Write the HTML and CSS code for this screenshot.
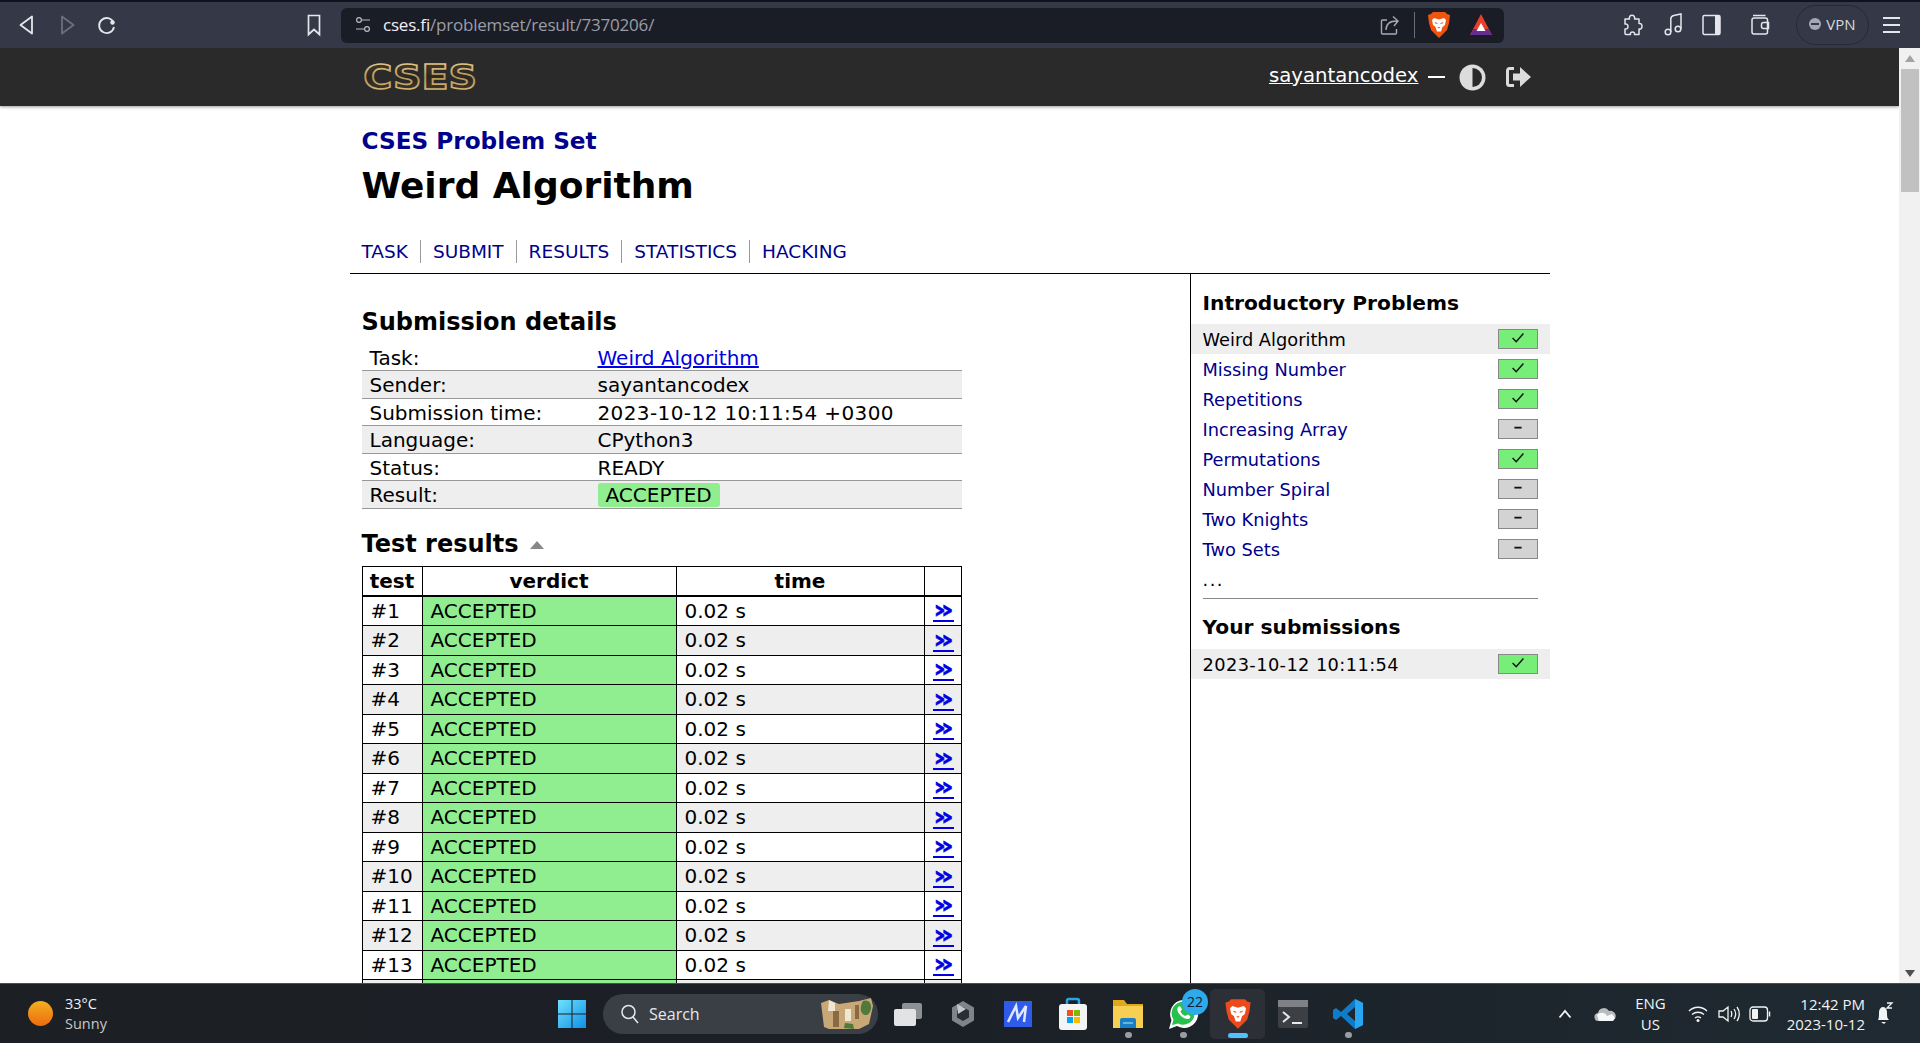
FILE: index.html
```html
<!DOCTYPE html>
<html>
  <head>
    <title>CSES - Weird Algorithm - Results</title>
    <meta name="viewport" content="width=device-width, initial-scale=1" />
    <link rel="stylesheet" href="styles.css">
  </head>
  <body>
    <svg class="defs" width="0" height="0">
      <symbol id="check" viewBox="0 0 40 20"><path d="M14 9l4 4 8-9" fill="none" stroke="#111" stroke-width="1.6"/></symbol>
      <symbol id="dash" viewBox="0 0 40 20"><path d="M16 8.5h8" fill="none" stroke="#111" stroke-width="2"/></symbol>
      <linearGradient id="gold" x1="0" y1="0" x2="0" y2="1">
        <stop offset="0" stop-color="#f0d9a0"/><stop offset="0.5" stop-color="#b79656"/><stop offset="1" stop-color="#e6c98a"/>
      </linearGradient>
      <linearGradient id="goldfill" x1="0" y1="0" x2="0" y2="1">
        <stop offset="0" stop-color="#4a3f2c"/><stop offset="0.5" stop-color="#2a2722"/><stop offset="1" stop-color="#4a3f2c"/>
      </linearGradient>
    </svg>

    <div class="tabstrip"></div>

    <div class="toolbar">
      <span class="tool"><svg width="20" height="24" viewBox="0 0 20 24"><path d="M15 3.5v17L3.5 12z" fill="none" stroke="#e4e6ec" stroke-width="1.8" stroke-linejoin="round"/></svg></span>
      <span class="tool"><svg width="20" height="24" viewBox="0 0 20 24"><path d="M5 3.5v17L16.500 12z" fill="none" stroke="#6b7080" stroke-width="1.8" stroke-linejoin="round"/></svg></span>
      <span class="tool"><svg width="22" height="24" viewBox="0 0 22 24"><path d="M17.500 9.500A7.500 7.500 0 1 0 18 14" fill="none" stroke="#e4e6ec" stroke-width="1.8"/><circle cx="16.500" cy="9.500" r="2.200" fill="#e4e6ec"/></svg></span>
      <span class="tool tool-bookmark"><svg width="16" height="24" viewBox="0 0 16 24"><path d="M2.500 2.500h11v19L8 16.500l-5.500 5z" fill="none" stroke="#e4e6ec" stroke-width="1.7"/></svg></span>

      <div class="urlbar">
        <svg class="url-tune" width="16" height="20" viewBox="0 0 16 20"><g fill="none" stroke="#b9bcc6" stroke-width="1.200"><circle cx="4" cy="5" r="2.400"/><path d="M7 5h8M1 14h8"/><circle cx="12" cy="14" r="2.400"/></g></svg>
        <span class="url"><b>cses.fi</b>/problemset/result/7370206/</span>
        <svg class="url-share" width="20" height="24" viewBox="0 0 20 24"><path d="M7 7H2.500a1 1 0 0 0-1 1v12a1 1 0 0 0 1 1h13a1 1 0 0 0 1-1v-4M6 17c0-6 4-9 11-9M13 3.500l5 4.500-4 5" fill="none" stroke="#a7aab5" stroke-width="1.400"/></svg>
        <span class="url-divider"></span>
        <svg class="url-brave" width="22" height="28" viewBox="0 0 22 28"><path d="M5 1h12l2 2 3 1-1 8-2 7-8 8-8-8-2-7-1-8 3-1z" fill="#f0540f"/><path d="M6 7l5 1.500L16 7l2 2-1 5-2.500 2-1.500 4.500h-4L7.500 16 5 14 4 9z" fill="#fff"/><path d="M6.500 11l3 1v1l-2-.5zM15.500 11l-3 1v1l2-.5zM9.500 16h3l-1.500 1.500z" fill="#f0540f"/></svg>
        <svg class="url-bat" width="24" height="24" viewBox="0 0 24 24"><path d="M12 1l11 21H1z" fill="#e8402a"/><path d="M1 22l3.500-6h15l3.500 6z" fill="#662d91"/><path d="M12 10l4.500 8h-9z" fill="#fff"/></svg>
      </div>

      <span class="tool tool-puzzle"><svg width="22" height="26" viewBox="0 0 22 26"><path d="M4 7h4.500c-1.500-5 6.500-5 5 0H18v4.500c4-1 4 6.500 0 5.500v5.500h-4.500c1-3.500-5-3.500-4 0H5c-1 0-1-1-1-1v-4.500c4 1 4-6 0-5z" fill="none" stroke="#e4e6ec" stroke-width="1.500" stroke-linejoin="round"/></svg></span>
      <span class="tool tool-music"><svg width="20" height="26" viewBox="0 0 20 26"><g fill="none" stroke="#e4e6ec" stroke-width="1.500"><circle cx="5" cy="20" r="2.800"/><circle cx="15" cy="17" r="2.800"/><path d="M7.800 20V7c0-2 1-3 3-3.500L18 2v15"/></g></svg></span>
      <span class="tool tool-sidebar"><svg width="20" height="22" viewBox="0 0 20 22"><rect x="1" y="1.500" width="17" height="19" rx="1.500" fill="none" stroke="#e4e6ec" stroke-width="1.500"/><rect x="13" y="1.500" width="5" height="19" fill="#e4e6ec"/></svg></span>
      <span class="tool tool-wallet"><svg width="20" height="24" viewBox="0 0 20 24"><g fill="none" stroke="#e4e6ec" stroke-width="1.500"><rect x="2" y="5" width="15.500" height="16" rx="2"/><path d="M3 2.500h12.500M18.500 9.500h-5a2 2 0 0 0-2 2v2a2 2 0 0 0 2 2h5z"/></g></svg></span>
      <span class="vpn"><span class="vpn-dot"></span>VPN</span>
      <span class="menu"><i></i><i></i><i></i></span>
    </div>

    <div class="viewport">
      <div class="page">
        <div class="site-header">
          <div class="site-header-inner">
            <svg class="logo" width="124" height="44" viewBox="0 0 124 44"><text x="1" y="33" transform="scale(1.165 1)">CSES</text></svg>
            <div class="account">
              <a class="username" href="#">sayantancodex</a>
              <span class="account-dash"></span>
              <svg width="27" height="27" viewBox="0 0 27 27"><circle cx="13.500" cy="13.500" r="13" fill="#dcdcdc"/><path d="M13.500 4a9.500 9.500 0 0 1 0 19z" fill="#2a2a2a"/></svg>
              <svg class="logout" width="27" height="24" viewBox="0 0 27 24"><path d="M9 3.500H4.500A2 2 0 0 0 2.500 5.500v13a2 2 0 0 0 2 2H9" fill="none" stroke="#dcdcdc" stroke-width="3"/><path d="M8 8.500h7V2l11 10-11 10v-6.500H8z" fill="#dcdcdc"/></svg>
            </div>
          </div>
        </div>

        <div class="content">
          <div class="title-block">
            <a class="set-title" href="#">CSES Problem Set</a>
            <h1>Weird Algorithm</h1>
            <div class="nav">
              <a href="#">TASK</a><a href="#">SUBMIT</a><a href="#">RESULTS</a><a href="#">STATISTICS</a><a href="#">HACKING</a>
            </div>
          </div>

          <div class="columns">
            <div class="main-col">
              <h2>Submission details</h2>
              <table class="details">
                <tr><td class="label">Task:</td><td><a href="#">Weird Algorithm</a></td></tr>
                <tr><td class="label">Sender:</td><td>sayantancodex</td></tr>
                <tr><td class="label">Submission time:</td><td class="date">2023-10-12 10:11:54 +0300</td></tr>
                <tr><td class="label">Language:</td><td>CPython3</td></tr>
                <tr><td class="label">Status:</td><td>READY</td></tr>
                <tr><td class="label">Result:</td><td><span class="accepted">ACCEPTED</span></td></tr>
              </table>

              <h2 class="results-title">Test results <span class="collapse"></span></h2>
              <table class="tests">
                <tr><th class="c-test">test</th><th class="c-verdict">verdict</th><th class="c-time">time</th><th class="c-link"></th></tr>
                <tr><td>#1</td><td class="ok">ACCEPTED</td><td>0.02 s</td><td><a class="more" href="#">»</a></td></tr>
                <tr><td>#2</td><td class="ok">ACCEPTED</td><td>0.02 s</td><td><a class="more" href="#">»</a></td></tr>
                <tr><td>#3</td><td class="ok">ACCEPTED</td><td>0.02 s</td><td><a class="more" href="#">»</a></td></tr>
                <tr><td>#4</td><td class="ok">ACCEPTED</td><td>0.02 s</td><td><a class="more" href="#">»</a></td></tr>
                <tr><td>#5</td><td class="ok">ACCEPTED</td><td>0.02 s</td><td><a class="more" href="#">»</a></td></tr>
                <tr><td>#6</td><td class="ok">ACCEPTED</td><td>0.02 s</td><td><a class="more" href="#">»</a></td></tr>
                <tr><td>#7</td><td class="ok">ACCEPTED</td><td>0.02 s</td><td><a class="more" href="#">»</a></td></tr>
                <tr><td>#8</td><td class="ok">ACCEPTED</td><td>0.02 s</td><td><a class="more" href="#">»</a></td></tr>
                <tr><td>#9</td><td class="ok">ACCEPTED</td><td>0.02 s</td><td><a class="more" href="#">»</a></td></tr>
                <tr><td>#10</td><td class="ok">ACCEPTED</td><td>0.02 s</td><td><a class="more" href="#">»</a></td></tr>
                <tr><td>#11</td><td class="ok">ACCEPTED</td><td>0.02 s</td><td><a class="more" href="#">»</a></td></tr>
                <tr><td>#12</td><td class="ok">ACCEPTED</td><td>0.02 s</td><td><a class="more" href="#">»</a></td></tr>
                <tr><td>#13</td><td class="ok">ACCEPTED</td><td>0.02 s</td><td><a class="more" href="#">»</a></td></tr>
                <tr><td></td><td class="ok"></td><td></td><td></td></tr>
              </table>
            </div>

            <div class="side-col">
              <h3>Introductory Problems</h3>
              <ul class="tasks">
                <li class="current"><span>Weird Algorithm</span><svg class="badge done"><use href="#check"/></svg></li>
                <li><a href="#">Missing Number</a><svg class="badge done"><use href="#check"/></svg></li>
                <li><a href="#">Repetitions</a><svg class="badge done"><use href="#check"/></svg></li>
                <li><a href="#">Increasing Array</a><svg class="badge"><use href="#dash"/></svg></li>
                <li><a href="#">Permutations</a><svg class="badge done"><use href="#check"/></svg></li>
                <li><a href="#">Number Spiral</a><svg class="badge"><use href="#dash"/></svg></li>
                <li><a href="#">Two Knights</a><svg class="badge"><use href="#dash"/></svg></li>
                <li><a href="#">Two Sets</a><svg class="badge"><use href="#dash"/></svg></li>
                <li><span class="dots">...</span></li>
              </ul>
              <hr />
              <h3 class="subs-title">Your submissions</h3>
              <ul class="tasks">
                <li class="current"><span class="date">2023-10-12 10:11:54</span><svg class="badge done"><use href="#check"/></svg></li>
              </ul>
            </div>
          </div>
        </div>
      </div>

      <div class="scrollbar">
        <span class="arrow-up"></span>
        <span class="thumb"></span>
        <span class="arrow-down"></span>
      </div>
    </div>

    <div class="taskbar">
      <div class="weather">
        <span class="sun"></span>
        <div class="weather-text"><div>33°C</div><div class="dim">Sunny</div></div>
      </div>

      <svg class="win" width="30" height="30" viewBox="0 0 30 30">
        <defs><linearGradient id="win" x1="0" y1="0" x2="1" y2="1"><stop offset="0" stop-color="#6fe2fb"/><stop offset="1" stop-color="#0f8fe8"/></linearGradient></defs>
        <path d="M1 1h13.500v13.500H1zM15.500 1H29v13.500H15.500zM1 15.500h13.500V29H1zM15.500 15.500H29V29H15.500z" fill="url(#win)"/>
      </svg>

      <div class="search">
        <svg width="20" height="22" viewBox="0 0 20 22"><circle cx="8.500" cy="9" r="6.500" fill="none" stroke="#e6e8ea" stroke-width="1.500"/><path d="M13 14l5 6" stroke="#e6e8ea" stroke-width="1.500"/></svg>
        <span>Search</span>
        <svg class="search-art" width="56" height="34" viewBox="0 0 56 34"><path d="M2 6l8-3 10 4 20-3 12-3 2 8-4 18-10 5H10L5 30z" fill="#c9a878"/><path d="M10 3l6 3v8H9zM26 12h6v12h-6z" fill="#efe6d4"/><path d="M44 4c5-2 9 2 8 8s-6 8-9 4 0-10 1-12zM26 26l8 1 1 5-10-1z" fill="#4f7a3a"/><path d="M14 14v16h6V14zM36 8h4v14h-4z" fill="#8a6a44"/></svg>
      </div>

      <span class="task task-first"><svg width="30" height="28" viewBox="0 0 30 28"><rect x="9" y="3" width="20" height="16" rx="2" fill="#8d9094"/><rect x="1" y="9" width="22" height="17" rx="2" fill="#e2e3e4"/></svg></span>
      <span class="task"><svg width="28" height="30" viewBox="0 0 28 30"><path d="M14 2l11 6.500v13L14 28 3 21.500v-13z" fill="#7f8489"/><path d="M14 8l6 3.500v7L14 22l-6-3.500v-7z" fill="#2a2e33"/><path d="M8 5l9 5-8 5z" fill="#c5c8cb"/></svg></span>
      <span class="task"><svg width="30" height="28" viewBox="0 0 30 28"><rect x="1" y="1" width="28" height="26" fill="#2f5be8"/><path d="M5 22L13 6l2 12 8-12-2 16" fill="none" stroke="#dfe8ff" stroke-width="2.500"/></svg></span>
      <span class="task"><svg width="30" height="34" viewBox="0 0 30 34"><path d="M9 8V4a2 2 0 0 1 2-2h8a2 2 0 0 1 2 2v4" fill="none" stroke="#2aa4e8" stroke-width="2.500"/><rect x="1" y="7" width="28" height="26" rx="3" fill="#f3f4f5"/><rect x="9" y="13" width="6" height="6" fill="#f25022"/><rect x="16" y="13" width="6" height="6" fill="#7fba00"/><rect x="9" y="20" width="6" height="6" fill="#00a4ef"/><rect x="16" y="20" width="6" height="6" fill="#ffb900"/></svg></span>
      <span class="task"><svg width="32" height="32" viewBox="0 0 32 32"><path d="M1 2h11l3 4h16v24H1z" fill="#e2a81c"/><path d="M1 8h30v22H1z" fill="#f7cf52"/><path d="M10 20h12a2 2 0 0 1 2 2v8H8v-8a2 2 0 0 1 2-2z" fill="#1a7fc4"/><path d="M11 25h10" stroke="#7cc8ee" stroke-width="1.500"/></svg><i class="pip"></i></span>
      <span class="task task-wa"><svg width="32" height="34" viewBox="0 0 32 34"><path d="M2 32l2.500-9A14 14 0 1 1 10 29z" fill="#fff"/><path d="M5 28l1.500-5.500A11.500 11.500 0 1 1 11 26.500z" fill="#28c04c"/><path d="M11 10c2-2 3 0 4 2.500l-1.500 2c1 2 2.500 3.500 5 4.500l2-1.500c2.500 1 4 2 2 4-4 3-15-6-11.500-11.500z" fill="#fff"/></svg><b class="wa-count">22</b><i class="pip"></i></span>
      <span class="task task-active"><svg width="26" height="32" viewBox="0 0 22 28"><path d="M5 1h12l2 2 3 1-1 8-2 7-8 8-8-8-2-7-1-8 3-1z" fill="#ec4a1c"/><path d="M6 7l5 1.500L16 7l2 2-1 5-2.500 2-1.500 4.500h-4L7.500 16 5 14 4 9z" fill="#fff"/><path d="M6.500 11l3 1v1l-2-.5zM15.500 11l-3 1v1l2-.5zM9.500 16h3l-1.500 1.500z" fill="#ec4a1c"/></svg><i class="pip-wide"></i></span>
      <span class="task"><svg width="30" height="30" viewBox="0 0 30 30"><rect x="0" y="1" width="30" height="28" rx="2" fill="#3c3f43"/><rect x="0" y="1" width="30" height="7" fill="#7e8185"/><path d="M5 13l6 5-6 5" fill="none" stroke="#e6e8ea" stroke-width="2"/><path d="M14 24h10" stroke="#e6e8ea" stroke-width="2"/></svg></span>
      <span class="task"><svg width="32" height="32" viewBox="0 0 32 32"><path d="M23 1l8 4v22l-8 4L9 18l-5 4-3-2v-8l3-2 5 4z" fill="#0e7cc9"/><path d="M23 1l8 4v22l-8 4z" fill="#2aa5f0"/><path d="M23 9l-8 7 8 7z" fill="#20262b"/></svg><i class="pip"></i></span>

      <div class="tray">
        <svg class="caret" width="14" height="10" viewBox="0 0 14 10"><path d="M1.500 8.500L7 2l5.500 6.500" fill="none" stroke="#f2f3f4" stroke-width="1.800"/></svg>
        <svg class="cloud" width="22" height="16" viewBox="0 0 22 16"><path d="M5 15a4 4 0 0 1-1-8 6 6 0 0 1 11-2 5 5 0 0 1 3 10z" fill="#b9bcbf"/><path d="M3 9c3-3 8-3 10 1l5-2 3 4-2 3H5z" fill="#f7f8f8"/></svg>
        <div class="lang"><div>ENG</div><div>US</div></div>
        <svg class="wifi" width="20" height="18" viewBox="0 0 20 18"><g fill="none" stroke="#f2f3f4" stroke-width="1.400"><path d="M1 6c5-5 13-5 18 0M4 9.500c3.500-3 8.500-3 12 0M7 13c2-1.500 4-1.500 6 0"/></g><circle cx="10" cy="15.500" r="1.500" fill="#f2f3f4"/></svg>
        <svg class="volume" width="22" height="18" viewBox="0 0 22 18"><g fill="none" stroke="#f2f3f4" stroke-width="1.300"><path d="M1 6h4l5-4v14l-5-4H1zM13 6c1 2 1 4 0 6M16 4c2 3 2 7 0 10M19 2c3 4 3 10 0 14"/></g></svg>
        <svg class="battery" width="22" height="16" viewBox="0 0 22 16"><rect x="1" y="1" width="17.500" height="14" rx="3" fill="none" stroke="#f2f3f4" stroke-width="1.300"/><rect x="3" y="3" width="6" height="10" rx="1" fill="#f2f3f4"/><path d="M20.500 5.500v5" stroke="#f2f3f4" stroke-width="1.500"/></svg>
        <div class="clock"><div>12:42 PM</div><div>2023-10-12</div></div>
        <svg class="bell" width="20" height="24" viewBox="0 0 20 24"><path d="M4 18c1-2 1-4 1-8 0-3 2-5 4-5s4 2 4 5c0 4 0 6 2 8z" fill="#f2f3f4"/><path d="M7 20h5l-2 2z" fill="#f2f3f4"/><path d="M13 1h5l-5 5h5" fill="none" stroke="#f2f3f4" stroke-width="1.300"/></svg>
      </div>
    </div>
  </body>
</html>
```

FILE: styles.css
```css
html {
  font-family: "DejaVu Sans", sans-serif;
}

body {
  margin: 0;
  height: 1043px;
  display: flex;
  flex-direction: column;
  overflow: hidden;
  background-color: white;
}

.defs {
  position: absolute;
}

/* browser chrome */
.tabstrip {
  height: 2px;
  background-color: #12121f;
}

.toolbar {
  height: 46px;
  display: flex;
  align-items: center;
  background-color: #343847;
  flex-shrink: 0;
}

.tool {
  width: 40px;
  display: flex;
  justify-content: center;
}

.tool:first-child {
  margin-left: 7px;
}

.tool-bookmark {
  margin-left: 167px;
  margin-right: 7px;
}

.urlbar {
  width: 1163px;
  height: 35px;
  display: flex;
  align-items: center;
  background-color: #1a1c26;
  border-radius: 6px;
  font-family: "Open Sans", sans-serif;
  font-size: 17px;
  color: #9a9da8;
}

.url-tune {
  margin-left: 14px;
}

.url {
  margin-left: 12px;
  margin-top: -2px;
  letter-spacing: -0.2px;
  flex: 1;
}

.url b {
  font-weight: normal;
  color: #f0f1f4;
}

.url-divider {
  width: 1px;
  height: 26px;
  margin: 0 13px 0 14px;
  background-color: #6b6e78;
}

.url-brave {
  margin-right: 19px;
}

.url-bat {
  margin-right: 11px;
}

.tool-puzzle {
  margin-left: 108px;
}

.tool-music {
  margin-left: 1px;
}

.tool-sidebar {
  margin-left: -1px;
}

.tool-wallet {
  margin-left: 8px;
}

.vpn {
  width: 73px;
  height: 40px;
  margin-left: 16px;
  box-sizing: border-box;
  display: flex;
  align-items: center;
  justify-content: center;
  gap: 5px;
  padding-bottom: 2px;
  border: 1px solid #262a36;
  border-radius: 20px;
  font-family: "Open Sans", sans-serif;
  font-size: 15px;
  color: #d6d8de;
}

.vpn-dot {
  width: 12px;
  height: 12px;
  border-radius: 50%;
  background: linear-gradient(#343847, #343847) center / 8px 2px no-repeat #a4a7b5;
}

.menu {
  margin-left: 14px;
  display: flex;
  flex-direction: column;
  gap: 5px;
}

.menu i {
  display: block;
  width: 17px;
  height: 2px;
  background-color: #e4e6ec;
}

/* page */
.viewport {
  flex: 1;
  min-height: 0;
  display: flex;
}

.page {
  flex: 1;
  min-width: 0;
  overflow: hidden;
}

.scrollbar {
  width: 21px;
  display: flex;
  flex-direction: column;
  align-items: center;
  background-color: #f1f1f1;
}

.arrow-up {
  margin-top: 7px;
  border: 5px solid transparent;
  border-top: 0;
  border-bottom: 7px solid #a3a3a3;
}

.thumb {
  width: 18px;
  height: 123px;
  margin-top: 7px;
  background-color: #c1c1c1;
}

.arrow-down {
  margin-top: auto;
  margin-bottom: 7px;
  border: 5px solid transparent;
  border-bottom: 0;
  border-top: 7px solid #505050;
}

.site-header {
  height: 58px;
  background-color: #2a2a2a;
  box-shadow: 0 1px 3px rgba(0, 0, 0, 0.4);
}

.site-header-inner {
  width: 1176px;
  height: 100%;
  margin: 0 auto;
  display: flex;
  align-items: center;
  justify-content: space-between;
}

.logo {
  margin-top: 1px;
}

.logo text {
  font-family: "DejaVu Sans", sans-serif;
  font-weight: bold;
  font-size: 34px;
  fill: url(#goldfill);
  stroke: url(#gold);
  stroke-width: 1.6px;
}

.account {
  display: flex;
  align-items: center;
  margin-right: 6px;
}

.username {
  font-size: 19.7px;
  color: white;
  margin-top: -4px;
}

.account-dash {
  width: 17px;
  height: 2px;
  margin: 0 14px 0 9px;
  background-color: white;
}

.logout {
  margin-left: 19px;
}

.content {
  width: 1200px;
  margin: 0 auto;
}

.title-block {
  padding: 20px 12px 11px;
  border-bottom: 1px solid black;
}

.set-title {
  display: block;
  font-size: 23.2px;
  line-height: 30px;
  font-weight: bold;
  color: #00008b;
  text-decoration: none;
}

h1 {
  font-size: 36px;
  line-height: 46px;
  margin: 7px 0 0;
}

.nav {
  display: flex;
  margin-top: 31px;
}

.nav a {
  font-size: 18.5px;
  line-height: 22px;
  padding: 1px 12px 0;
  margin-bottom: -1px;
  border-right: 1px solid #999;
  color: #00008b;
  text-decoration: none;
}

.nav a:first-child {
  padding-left: 0;
}

.nav a:last-child {
  border-right: none;
}

.columns {
  display: grid;
  grid-template-columns: 840px 360px;
}

.main-col {
  padding: 33px 0 0 12px;
}

h2 {
  font-size: 24px;
  line-height: 30px;
  margin: 0;
}

table {
  width: 600px;
  border-collapse: collapse;
  table-layout: fixed;
  font-size: 20px;
}

.details {
  margin-top: 6px;
}

.details tr {
  height: 27.5px;
}

.details td {
  padding: 2px 0 0 8px;
  border-bottom: 1px solid #999;
  line-height: 24px;
}

.details td:last-child {
  padding-left: 1px;
}

.details tr:nth-child(even) {
  background-color: #eee;
}

.label {
  width: 227px;
}

.details a {
  color: #0000e0;
}

.date {
  letter-spacing: 0.4px;
}

.accepted {
  display: inline-block;
  padding: 0 8px;
  border-radius: 3px;
  background-color: #90ee90;
}

.results-title {
  margin-top: 20px;
}

.collapse {
  display: inline-block;
  margin-left: 3px;
  vertical-align: 3px;
  border: 7px solid transparent;
  border-top: 0;
  border-bottom: 8px solid #888;
}

.tests {
  margin-top: 7px;
  border: 1px solid black;
}

.tests th,
.tests td {
  border: 1px solid black;
  padding: 0 0 0 8px;
  line-height: 24px;
}

.tests th {
  border-bottom-width: 2px;
  height: 27px;
  padding: 1px 0 0;
  text-align: center;
}

.tests td {
  height: 28.5px;
}

.tests tr:nth-child(odd) td {
  background-color: #eee;
}

.tests td.ok,
.tests tr:nth-child(odd) td.ok {
  background-color: #90ee90;
}

.c-test {
  width: 59px;
}

.c-verdict {
  width: 253px;
}

.c-time {
  width: 247px;
}

.more {
  display: inline-block;
  font-size: 25px;
  line-height: 24px;
  font-weight: bold;
  color: #0000e0;
  transform: scaleX(1.3);
  transform-origin: left center;
  -webkit-text-stroke: 0.5px #0000e0;
}

.side-col {
  border-left: 1px solid black;
  padding-top: 14px;
}

h3 {
  font-size: 20.2px;
  line-height: 30px;
  margin: 0 0 6px 12px;
}

.subs-title {
  margin-top: 13px;
  margin-bottom: 7px;
}

.tasks {
  list-style: none;
  margin: 0;
  padding: 0;
}

.tasks li {
  height: 30px;
  display: flex;
  align-items: center;
  justify-content: space-between;
  padding: 0 12px;
  font-size: 17.8px;
}

.tasks li a,
.tasks li span {
  margin-top: 1px;
}

.tasks a {
  color: #00008b;
  text-decoration: none;
}

.dots {
  letter-spacing: 1.5px;
}

.current {
  background-color: #eee;
}

.badge {
  width: 40px;
  height: 20px;
  box-sizing: border-box;
  border: 1px solid #888;
  background-color: #d3d3d3;
}

.badge.done {
  background-color: #77ee77;
}

.side-col hr {
  height: 1px;
  margin: 4px 12px 0;
  border: none;
  background-color: #888;
}

/* taskbar */
.taskbar {
  height: 59px;
  flex-shrink: 0;
  display: flex;
  align-items: center;
  background: linear-gradient(90deg, #1c1f24, #1b2026 50%, #1f2a32);
  font-family: "Open Sans", sans-serif;
  color: #f2f3f4;
  box-shadow: 0 -1px 0 #4a4d52;
}

.weather {
  width: 557px;
  display: flex;
  align-items: center;
}

.sun {
  width: 25px;
  height: 25px;
  margin-left: 28px;
  border-radius: 50%;
  background: linear-gradient(#f2b01e, #ee6a10);
}

.weather-text {
  margin-left: 12px;
  font-size: 14.5px;
  line-height: 20px;
}

.dim {
  color: #c6c8cb;
}

.search {
  width: 275px;
  height: 40px;
  margin-left: 16px;
  display: flex;
  align-items: center;
  gap: 9px;
  padding-left: 17px;
  box-sizing: border-box;
  border-radius: 20px;
  background-color: #3a3f46;
  font-size: 16px;
  color: #e6e8ea;
}

.search-art {
  margin-left: auto;
  margin-right: 3px;
}

.task {
  position: relative;
  width: 55px;
  height: 50px;
  display: flex;
  align-items: center;
  justify-content: center;
}

.task-first {
  margin-left: 2px;
}

.task-active {
  background-color: #2c3036;
  border-radius: 5px;
}

.pip,
.pip-wide {
  position: absolute;
  bottom: 1px;
  left: 50%;
  width: 7px;
  height: 6px;
  margin-left: -3px;
  border-radius: 3px;
  background-color: #9a9c9f;
}

.pip-wide {
  width: 20px;
  height: 5px;
  margin-left: -10px;
  background-color: #4cc2ff;
}

.wa-count {
  position: absolute;
  top: 0;
  right: 2px;
  width: 26px;
  height: 26px;
  border-radius: 50%;
  background-color: #2ea9ea;
  color: #10202c;
  font-size: 14px;
  font-weight: normal;
  line-height: 26px;
  text-align: center;
}

.tray {
  margin-left: auto;
  display: flex;
  align-items: center;
}

.tray > svg {
  flex-shrink: 0;
}

.cloud {
  margin-left: 22px;
}

.lang {
  margin-left: 19px;
  font-size: 15px;
  line-height: 21px;
  text-align: center;
}

.wifi {
  margin-left: 22px;
}

.volume {
  margin-left: 10px;
}

.battery {
  margin-left: 9px;
}

.clock {
  margin-left: 16px;
  font-size: 15px;
  line-height: 20px;
  text-align: right;
}

.bell {
  margin: 0 26px 0 9px;
}
```
